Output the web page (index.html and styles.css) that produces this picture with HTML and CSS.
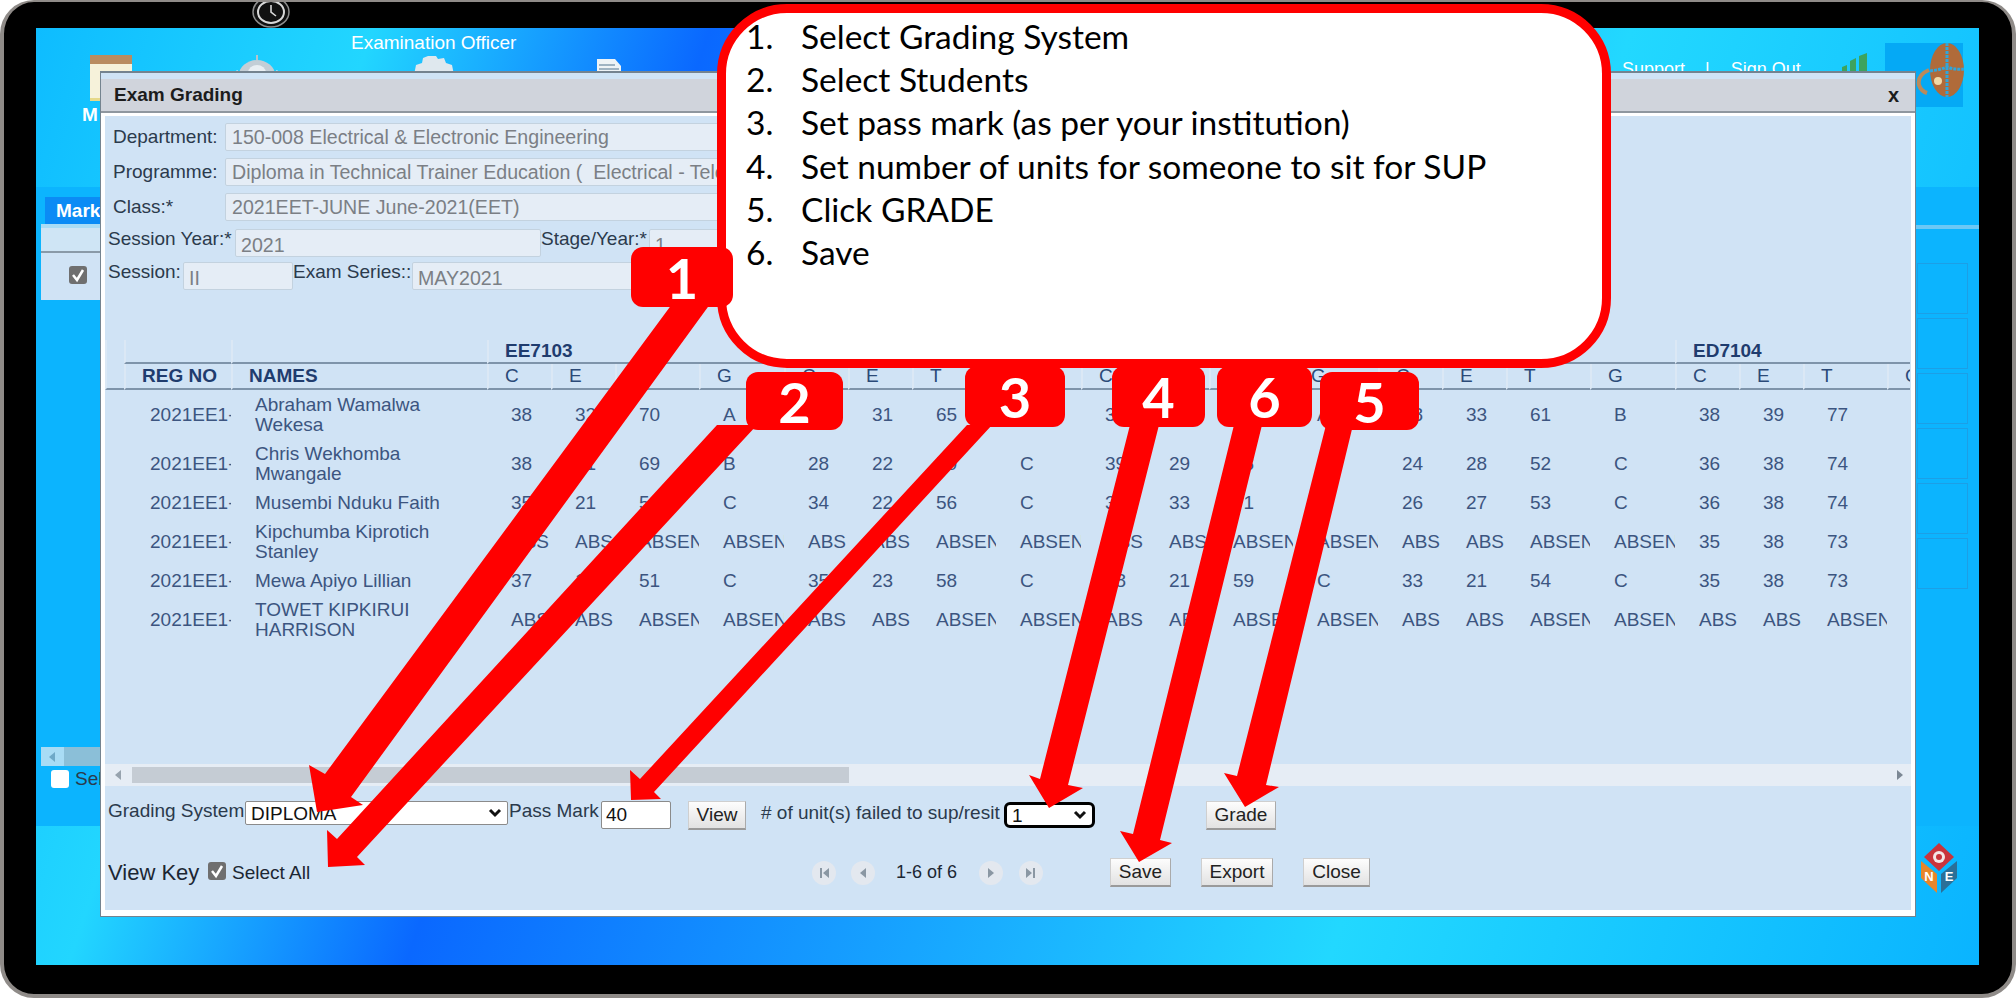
FILE: index.html
```html
<!DOCTYPE html>
<html lang="en">
<head>
    <meta charset="UTF-8">
    <title>Exam Grading</title>
    <link rel="stylesheet" href="styles.css">
</head>
<body>
<div class="device">
    <svg class="camera" width="38" height="30" viewBox="0 0 38 30">
        <ellipse cx="19" cy="13" rx="18" ry="15" fill="#111" stroke="#8d8d8d" stroke-width="1.5"/>
        <ellipse cx="19" cy="13" rx="13" ry="11" fill="none" stroke="#d8d8d8" stroke-width="2"/>
        <path d="M19 6v7l5 4" fill="none" stroke="#d8d8d8" stroke-width="1.6"/>
    </svg>

    <div class="screen">
        <header class="topbar">
            <div class="topbar-main">
                <div class="role">Examination Officer</div>
                <div class="nav">
                    <div class="nav-book">
                        <div class="book-icon"></div>
                        <span>M</span>
                    </div>
                    <svg class="nav-wheel" width="42" height="20" viewBox="0 0 42 20">
                        <path d="M20 0h2v5h-2z" fill="#b9c4cc"/>
                        <path d="M3 20a18 15 0 0 1 36 0z" fill="#c3ced6"/>
                        <path d="M3 20 0 16M39 20l3-4" stroke="#e6eef2" stroke-width="3"/>
                        <ellipse cx="21" cy="18" rx="9" ry="8" fill="#e9eff3"/>
                    </svg>
                    <svg class="nav-gear" width="42" height="20" viewBox="0 0 42 20">
                        <path d="M15 1h8l2 3 6-1 2 5 6 2 2 10H1l2-10 6-2 1-5z" fill="#dfe8ee"/>
                    </svg>
                    <svg class="nav-doc" width="26" height="16" viewBox="0 0 26 16">
                        <path d="M1 0h18l6 7v9H1z" fill="#eef3f6"/>
                        <path d="M3 6h16M3 10h20" stroke="#9fb3c2" stroke-width="2"/>
                    </svg>
                </div>
            </div>
            <div class="links">
                <span>Support</span><span class="pipe">|</span><span>Sign Out</span>
                <svg class="signal" width="28" height="18" viewBox="0 0 28 18">
                    <path d="M1 18v-4l5-2v6zM9 18V8l6-3v13zM18 18V3l8-3v18z" fill="#3da35d"/>
                </svg>
            </div>
            <div class="logo">
                <svg width="50" height="56" viewBox="0 0 50 56">
                    <ellipse cx="32" cy="27" rx="17" ry="27" fill="#b06b3a"/>
                    <path d="M32 0v24M15 28q9-1 17-4 8 3 17 2M32 24v30" fill="none" stroke="#2fa6dc" stroke-width="3" stroke-dasharray="3 1"/>
                    <path d="M14 27q-12 5-10 15 2 6 8 8" fill="none" stroke="#b98a5c" stroke-width="4"/>
                    <circle cx="23" cy="38" r="5" fill="#f0d9a8" stroke="#b06b3a" stroke-width="2"/>
                </svg>
            </div>
        </header>

        <section class="panel">
            <div class="panel-left">
                <div class="panel-tab">Mark</div>
                <div class="panel-band"></div>
                <div class="panel-head"></div>
                <div class="panel-row"><span class="tick tick-dark"><svg viewBox="0 0 18 18" width="18" height="18"><path d="M4 9l4 5 6-10" fill="none" stroke="#fff" stroke-width="2.5"/></svg></span></div>
                <div class="panel-scroll"><span class="arrow-left"></span><span class="panel-thumb"></span></div>
                <div class="panel-select"><span class="tick"></span>Select</div>
            </div>
            <div class="panel-right">
                <div class="panel-band"></div>
                <div class="side-box"></div>
                <div class="side-box"></div>
                <div class="side-box"></div>
                <div class="side-box"></div>
                <div class="side-box"></div>
                <div class="side-box"></div>
            </div>
        </section>

        <div class="brand-row">
            <svg width="38" height="50" viewBox="0 0 38 50">
                <path d="M19 0l15 14-15 14L4 14z" fill="#c9343c"/>
                <circle cx="19" cy="14" r="6" fill="#f3e6e6"/>
                <circle cx="19" cy="14" r="3" fill="#c9343c"/>
                <path d="M1 18l16 13v19L1 35z" fill="#e8862a"/>
                <path d="M37 18L21 31v19l16-15z" fill="#2b6f98"/>
                <text x="9" y="38" class="cube-n">N</text>
                <text x="29" y="38" class="cube-e">E</text>
            </svg>
        </div>
    </div>

    <div class="modal">
        <div class="modal-title">
            <span>Exam Grading</span>
            <span class="modal-close">x</span>
        </div>
        <div class="modal-body">
            <div class="form-row">
                <label class="label-wide">Department:</label>
                <input class="field field-long" value="150-008 Electrical &amp; Electronic Engineering" readonly>
            </div>
            <div class="form-row">
                <label class="label-wide">Programme:</label>
                <input class="field field-long" value="Diploma in Technical Trainer Education (  Electrical - Telecommunication)" readonly>
            </div>
            <div class="form-row form-row-last">
                <label class="label-wide">Class:*</label>
                <input class="field field-long" value="2021EET-JUNE June-2021(EET)" readonly>
            </div>
            <div class="form-row form-row-tight">
                <label class="label-year">Session Year:*</label>
                <input class="field field-year" value="2021" readonly>
                <label class="label-stage">Stage/Year:*</label>
                <input class="field field-stage" value="1" readonly>
            </div>
            <div class="form-row form-row-tight">
                <label class="label-session">Session:</label>
                <input class="field field-session" value="II" readonly>
                <label class="label-series">Exam Series::</label>
                <input class="field field-series" value="MAY2021" readonly>
            </div>

            <div class="table-wrap">
                <table class="grades">
                    <colgroup>
                        <col class="col-gap"><col class="col-reg"><col class="col-name">
                        <col class="col-c"><col class="col-e"><col class="col-t"><col class="col-g">
                        <col class="col-c"><col class="col-e"><col class="col-t"><col class="col-g">
                        <col class="col-c"><col class="col-e"><col class="col-t"><col class="col-g">
                        <col class="col-c"><col class="col-e"><col class="col-t"><col class="col-g">
                        <col class="col-c"><col class="col-e"><col class="col-t"><col class="col-g">
                    </colgroup>
                    <thead>
                        <tr class="head-units">
                            <th class="blank"></th><th></th><th></th>
                            <th colspan="4">EE7103</th>
                            <th colspan="4"></th>
                            <th colspan="4"></th>
                            <th colspan="4"></th>
                            <th colspan="4">ED7104</th>
                        </tr>
                        <tr class="head-cols">
                            <th></th><th>REG NO</th><th>NAMES</th>
                            <th>C</th><th>E</th><th>T</th><th>G</th>
                            <th>C</th><th>E</th><th>T</th><th>G</th>
                            <th>C</th><th>E</th><th>T</th><th>G</th>
                            <th>C</th><th>E</th><th>T</th><th>G</th>
                            <th>C</th><th>E</th><th>T</th><th>G</th>
                        </tr>
                    </thead>
                    <tbody>
                        <tr class="tall">
                            <td></td><td class="reg">2021EE1-</td><td class="name">Abraham Wamalwa Wekesa</td>
                            <td>38</td><td>32</td><td>70</td><td>A</td>
                            <td>34</td><td>31</td><td>65</td><td>B</td>
                            <td>38</td><td>32</td><td>70</td><td>A</td>
                            <td>28</td><td>33</td><td>61</td><td>B</td>
                            <td>38</td><td>39</td><td>77</td><td></td>
                        </tr>
                        <tr class="tall">
                            <td></td><td class="reg">2021EE1-</td><td class="name">Chris Wekhomba Mwangale</td>
                            <td>38</td><td>31</td><td>69</td><td>B</td>
                            <td>28</td><td>22</td><td>50</td><td>C</td>
                            <td>39</td><td>29</td><td>68</td><td>B</td>
                            <td>24</td><td>28</td><td>52</td><td>C</td>
                            <td>36</td><td>38</td><td>74</td><td></td>
                        </tr>
                        <tr>
                            <td></td><td class="reg">2021EE1-</td><td class="name">Musembi Nduku Faith</td>
                            <td>35</td><td>21</td><td>56</td><td>C</td>
                            <td>34</td><td>22</td><td>56</td><td>C</td>
                            <td>38</td><td>33</td><td>71</td><td>A</td>
                            <td>26</td><td>27</td><td>53</td><td>C</td>
                            <td>36</td><td>38</td><td>74</td><td></td>
                        </tr>
                        <tr class="tall">
                            <td></td><td class="reg">2021EE1-</td><td class="name">Kipchumba Kiprotich Stanley</td>
                            <td>ABS</td><td>ABS</td><td>ABSENT</td><td>ABSENT</td>
                            <td>ABS</td><td>ABS</td><td>ABSENT</td><td>ABSENT</td>
                            <td>ABS</td><td>ABS</td><td>ABSENT</td><td>ABSENT</td>
                            <td>ABS</td><td>ABS</td><td>ABSENT</td><td>ABSENT</td>
                            <td>35</td><td>38</td><td>73</td><td></td>
                        </tr>
                        <tr>
                            <td></td><td class="reg">2021EE1-</td><td class="name">Mewa Apiyo Lillian</td>
                            <td>37</td><td>14</td><td>51</td><td>C</td>
                            <td>35</td><td>23</td><td>58</td><td>C</td>
                            <td>38</td><td>21</td><td>59</td><td>C</td>
                            <td>33</td><td>21</td><td>54</td><td>C</td>
                            <td>35</td><td>38</td><td>73</td><td></td>
                        </tr>
                        <tr class="tall">
                            <td></td><td class="reg">2021EE1-</td><td class="name">TOWET KIPKIRUI HARRISON</td>
                            <td>ABS</td><td>ABS</td><td>ABSENT</td><td>ABSENT</td>
                            <td>ABS</td><td>ABS</td><td>ABSENT</td><td>ABSENT</td>
                            <td>ABS</td><td>ABS</td><td>ABSENT</td><td>ABSENT</td>
                            <td>ABS</td><td>ABS</td><td>ABSENT</td><td>ABSENT</td>
                            <td>ABS</td><td>ABS</td><td>ABSENT</td><td></td>
                        </tr>
                    </tbody>
                </table>
            </div>

            <div class="hscroll">
                <span class="arrow-left arrow-grey"></span>
                <span class="hscroll-thumb"></span>
                <span class="arrow-right"></span>
            </div>

            <div class="controls">
                <label class="grading-label">Grading System</label>
                <select class="grading-select"><option>DIPLOMA</option></select>
                <label class="pass-label">Pass Mark</label>
                <input class="pass-input" value="40">
                <button class="btn btn-view">View</button>
                <span class="units-label"># of unit(s) failed to sup/resit</span>
                <select class="units-select"><option>1</option></select>
                <button class="btn btn-grade">Grade</button>
            </div>

            <div class="actions">
                <span class="view-key">View Key</span>
                <span class="tick tick-dark tick-all"><svg viewBox="0 0 18 18" width="18" height="18"><path d="M4 9l4 5 6-10" fill="none" stroke="#fff" stroke-width="2.5"/></svg></span>
                <span class="select-all">Select All</span>
                <span class="pager pager-first"><svg width="12" height="12" viewBox="0 0 12 12"><path d="M2 1h2v10H2zM11 1v10L5 6z" fill="#8a97a3"/></svg></span>
                <span class="pager pager-prev"><svg width="12" height="12" viewBox="0 0 12 12"><path d="M9 1v10L3 6z" fill="#8a97a3"/></svg></span>
                <span class="pager-text">1-6 of 6</span>
                <span class="pager pager-next"><svg width="12" height="12" viewBox="0 0 12 12"><path d="M3 1v10l6-5z" fill="#8a97a3"/></svg></span>
                <span class="pager pager-last"><svg width="12" height="12" viewBox="0 0 12 12"><path d="M1 1v10l6-5zM8 1h2v10H8z" fill="#8a97a3"/></svg></span>
                <button class="btn btn-save">Save</button>
                <button class="btn btn-export">Export</button>
                <button class="btn btn-close">Close</button>
            </div>
        </div>
    </div>

    <!-- tutorial overlay -->
    <svg class="arrows" width="2016" height="998" viewBox="0 0 2016 998">
        <polygon points="675,300 713,300 351,797 363,805 317,812 309,765 325,774"/>
        <polygon points="717,425 757,425 357,857 365,865 328,867 327,830 337,839"/>
        <polygon points="967,425 992,425 654,792 661,799 631,800 630,770 640,779"/>
        <polygon points="1130,425 1159,425 1068,785 1083,788 1049,808 1029,775 1040,779"/>
        <polygon points="1234,425 1262,425 1160,840 1172,843 1139,862 1120,831 1133,834"/>
        <polygon points="1326,425 1353,425 1266,785 1279,787 1245,807 1224,773 1237,776"/>
    </svg>
    <div class="badge badge-2">2</div>
    <div class="badge badge-3">3</div>
    <div class="badge badge-4">4</div>
    <div class="badge badge-6">6</div>
    <div class="badge badge-5">5</div>
    <div class="callout">
        <ol>
            <li>Select Grading System</li>
            <li>Select Students</li>
            <li>Set pass mark (as per your institution)</li>
            <li>Set number of units for someone to sit for SUP</li>
            <li>Click GRADE</li>
            <li>Save</li>
        </ol>
    </div>
    <div class="badge badge-1">1</div>
</div>
</body>
</html>
```

FILE: styles.css
```css
* {
    box-sizing: border-box;
}
body {
    margin: 0;
    background-color: #fff;
    font-family: "Liberation Sans", Arial, sans-serif;
    font-size: 19px;
    color: #2b3a4c;
    overflow: hidden;
}

/* tablet frame */
.device {
    position: relative;
    width: 2016px;
    height: 998px;
    padding: 26px 33px 29px 32px;
    background-color: #000;
    border: 4px solid #8f8b88;
    border-top-width: 2px;
    border-radius: 34px;
    overflow: hidden;
}
.camera {
    position: absolute;
    left: 248px;
    top: -3px;
}
.screen {
    display: flex;
    flex-direction: column;
    height: 937px;
    background: linear-gradient(108deg, #0ebcff 0%, #22d6ff 15%, #0a68ff 30%, #22d8ff 71%, #0ab4ff 100%);
}

/* header behind the dialog */
.topbar {
    display: flex;
    height: 159px;
    color: #fff;
}
.topbar-main {
    width: 1586px;
}
.role {
    padding: 4px 0 0 315px;
    height: 27px;
    line-height: 22px;
}
.nav {
    display: flex;
    align-items: flex-start;
}
.nav-book {
    width: 64px;
    margin-left: 46px;
    height: 90px;
}
.book-icon {
    width: 42px;
    height: 46px;
    margin-left: 8px;
    background: linear-gradient(#b98c60 0 9px, #f6f2da 9px);
    border-bottom: 3px solid #e6d98a;
}
.nav-book span {
    display: block;
    margin-top: 3px;
    font-weight: bold;
}
.nav-wheel {
    margin-left: 90px;
}
.nav-gear {
    margin-left: 135px;
}
.nav-doc {
    margin: 4px 0 0 141px;
}
.links {
    display: flex;
    align-items: flex-start;
    width: 263px;
    padding-top: 31px;
    font-size: 18px;
    line-height: 20px;
}
.pipe {
    margin: 0 21px 0 20px;
}
.signal {
    margin: -6px 0 0 40px;
}
.logo {
    width: 78px;
    height: 64px;
    margin-top: 15px;
    padding-left: 30px;
    background-color: #05a9f5;
}

/* page panel behind the dialog */
.panel {
    display: flex;
    justify-content: space-between;
    height: 639px;
    background-color: #0cb4fe;
}
.panel-left {
    width: 64px;
    padding: 10px 0 0 5px;
}
.panel-tab {
    height: 27px;
    margin-left: 4px;
    padding-left: 11px;
    background-color: #0b8bf5;
    color: #fff;
    font-weight: bold;
    line-height: 28px;
    white-space: nowrap;
}
.panel-band {
    height: 4px;
    background-color: #a9dcf5;
}
.panel-head {
    height: 25px;
    background-color: #cfe5f5;
    border-bottom: 2px solid #8a9aa8;
}
.panel-row {
    height: 47px;
    padding: 13px 0 0 28px;
    background-color: #d0e3f5;
}
.panel-scroll {
    display: flex;
    align-items: center;
    height: 19px;
    margin-top: 447px;
    padding-left: 8px;
    background-color: #a9dcf5;
}
.panel-thumb {
    flex: 1;
    height: 19px;
    margin-left: 9px;
    background-color: #8bbfd8;
}
.panel-select {
    display: flex;
    align-items: center;
    height: 40px;
    padding: 0 0 14px 10px;
    white-space: nowrap;
}
.panel-select .tick {
    flex: none;
    margin-right: 6px;
}
.panel-right {
    width: 64px;
    padding-top: 38px;
}
.panel-right .panel-band {
    margin-bottom: 34px;
    background-color: #6cc8f5;
}
.side-box {
    height: 51px;
    margin: 0 11px 4px 2px;
    border: 1px solid #1c9fe6;
}
.brand-row {
    display: flex;
    justify-content: flex-end;
    padding: 17px 21px 0 0;
}
.cube-n, .cube-e {
    font-family: "Liberation Sans", Arial, sans-serif;
    font-size: 13px;
    font-weight: bold;
    text-anchor: middle;
    fill: #fff;
}

/* exam grading dialog */
.modal {
    position: absolute;
    left: 96px;
    top: 69px;
    width: 1816px;
    height: 846px;
    background-color: #fff;
    border: 1px solid #74838f;
    border-top-width: 2px;
}
.modal-title {
    display: flex;
    justify-content: space-between;
    height: 40px;
    margin-bottom: 3px;
    padding: 6px 16px 0 13px;
    background: linear-gradient(#cfe3f5 0 6px, #d0d4dc 6px);
    border-bottom: 2px solid #8f979f;
    color: #1c1c1c;
    font-weight: bold;
    line-height: 32px;
}
.modal-close {
    font-size: 20px;
}
.modal-body {
    height: 794px;
    margin: 0 4px;
    padding-top: 7px;
    background-color: #d0e3f5;
}
.form-row {
    display: flex;
    height: 28px;
    margin-bottom: 7px;
    padding-left: 8px;
    line-height: 28px;
    white-space: nowrap;
    overflow: hidden;
}
.form-row-last {
    margin-bottom: 8px;
}
.form-row-tight {
    margin-bottom: 5px;
    padding-left: 3px;
    line-height: 20px;
}
label {
    display: block;
    flex: none;
}
.label-wide {
    width: 112px;
}
.label-year {
    width: 127px;
}
.label-stage {
    width: 108px;
}
.label-session {
    width: 75px;
}
.label-series {
    width: 119px;
}
.field {
    flex: none;
    height: 28px;
    padding: 0 6px;
    border: 1px solid #c3d2df;
    border-radius: 2px;
    background-color: #e5edf6;
    color: #7b7f85;
    font-family: inherit;
    font-size: 19.6px;
    outline: none;
}
.field-long {
    width: 560px;
}
.field-year {
    width: 306px;
}
.field-stage {
    width: 120px;
}
.field-session {
    width: 110px;
}
.field-series {
    width: 300px;
}
.form-row-tight .field {
    padding: 4px 5px 0;
}

/* marks table */
.table-wrap {
    width: 1805px;
    height: 424px;
    margin-top: 50px;
    overflow: hidden;
}
.grades {
    table-layout: fixed;
    width: 1867px;
    border-collapse: separate;
    border-spacing: 0;
    color: #3c5580;
}
.col-gap {
    width: 19px;
}
.col-reg {
    width: 107px;
}
.col-name {
    width: 256px;
}
.col-c, .col-e {
    width: 64px;
}
.col-t {
    width: 84px;
}
.col-g {
    width: 85px;
}
th {
    padding: 0 0 0 16px;
    color: #1f3c6e;
    text-align: left;
    font-weight: bold;
    white-space: nowrap;
    overflow: hidden;
    border-left: 2px solid #dbe8f5;
}
.head-units th {
    height: 24px;
    border-bottom: 2px solid #7e94aa;
}
.head-units th:first-child {
    border-bottom: none;
}
.head-cols th {
    height: 26px;
    color: #2b4a78;
    font-weight: normal;
    border-bottom: 2px solid #7e94aa;
}
.head-cols th:nth-child(2), .head-cols th:nth-child(3) {
    color: #1f3c6e;
    font-weight: bold;
}
td {
    height: 29px;
    padding: 0 0 0 24px;
    line-height: 20px;
    white-space: nowrap;
    overflow: hidden;
}
.tall td {
    height: 49px;
}
td.reg {
    padding-left: 26px;
}
td.name {
    padding-right: 37px;
    white-space: normal;
}

/* scrollbar */
.hscroll {
    display: flex;
    align-items: center;
    height: 22px;
    padding: 0 8px 0 10px;
    background-color: #e6edf5;
}
.hscroll-thumb {
    width: 717px;
    height: 16px;
    margin-left: 11px;
    background-color: #c5ccd4;
}
.arrow-left, .arrow-right {
    flex: none;
    width: 0;
    height: 0;
    border-top: 5px solid transparent;
    border-bottom: 5px solid transparent;
}
.arrow-left {
    border-right: 6px solid #6fa9c8;
}
.arrow-grey {
    border-right-color: #97a3ae;
}
.arrow-right {
    margin-left: auto;
    border-left: 6px solid #7c8894;
}

/* bottom controls */
.controls {
    display: flex;
    align-items: flex-start;
    height: 57px;
    margin-top: 15px;
    padding-left: 3px;
    white-space: nowrap;
}
.grading-label {
    width: 137px;
    line-height: 20px;
}
.grading-select, .units-select {
    appearance: none;
    padding: 0 0 0 5px;
    background-color: #fff;
    background-image: url("data:image/svg+xml,%3Csvg xmlns='http://www.w3.org/2000/svg' width='14' height='10'%3E%3Cpath d='M2 2l5 5 5-5' fill='none' stroke='%23111' stroke-width='3'/%3E%3C/svg%3E");
    background-repeat: no-repeat;
    background-position: right 5px center;
    color: #111;
    font-family: inherit;
    font-size: 19px;
}
.grading-select {
    width: 263px;
    height: 24px;
    border: 1px solid #8b8b8b;
    border-radius: 2px;
}
.pass-label {
    width: 92px;
    margin-left: 1px;
    line-height: 20px;
}
.pass-input {
    width: 70px;
    height: 28px;
    padding: 0 4px;
    border: 1px solid #8b8b8b;
    border-radius: 2px;
    font-family: inherit;
    font-size: 19px;
    color: #111;
}
.btn {
    flex: none;
    height: 29px;
    padding: 0;
    border: 1px solid #cfcfcf;
    border-right-color: #aaa;
    border-bottom: 2px solid #9a9a9a;
    background: linear-gradient(#fdfdfd, #e2e2e2);
    color: #222;
    font-family: inherit;
    font-size: 19px;
}
.btn-view {
    width: 58px;
    margin-left: 17px;
}
.units-label {
    width: 243px;
    margin-left: 15px;
    line-height: 24px;
}
.units-select {
    width: 91px;
    height: 26px;
    margin-top: 1px;
    border: 3px solid #000;
    border-radius: 6px;
}
.btn-grade {
    width: 70px;
    margin-left: 111px;
}
.actions {
    display: flex;
    align-items: center;
    height: 29px;
    padding-left: 3px;
    white-space: nowrap;
}
.view-key {
    width: 100px;
    font-size: 22px;
    color: #1c2733;
}
.tick {
    display: inline-block;
    width: 18px;
    height: 18px;
    border-radius: 3px;
    background-color: #fff;
}
.tick svg {
    display: block;
}
.tick-dark {
    background-color: #6f6f6f;
}
.tick-all {
    margin-top: -4px;
}
.select-all {
    width: 80px;
    margin-left: 6px;
    color: #1c2733;
}
.pager {
    display: flex;
    align-items: center;
    justify-content: center;
    flex: none;
    width: 24px;
    height: 24px;
    border-radius: 50%;
    background-color: #e3e8ef;
}
.pager-first {
    margin-left: 500px;
}
.pager-prev {
    margin-left: 15px;
}
.pager-text {
    width: 104px;
    padding-left: 21px;
    font-size: 18px;
    color: #1c2733;
}
.pager-last {
    margin-left: 16px;
}
.btn-save {
    width: 61px;
    margin-left: 67px;
}
.btn-export {
    width: 72px;
    margin-left: 30px;
}
.btn-close {
    width: 67px;
    margin-left: 30px;
}

/* tutorial overlay */
.arrows {
    position: absolute;
    left: -4px;
    top: -2px;
    fill: #ff0000;
}
.callout {
    position: absolute;
    left: 713px;
    top: 2px;
    width: 894px;
    height: 364px;
    padding: 2px 0 0 20px;
    background-color: #fff;
    border: 9px solid #ff0000;
    border-radius: 70px;
    font-family: Lato, "Open Sans", sans-serif;
    font-size: 33.5px;
    color: #000;
}
.callout ol {
    margin: 0;
    padding: 0;
    list-style: none;
    counter-reset: step;
}
.callout li {
    display: flex;
    height: 43.2px;
    line-height: 43.2px;
    counter-increment: step;
}
.callout li::before {
    content: counter(step) ".";
    width: 55px;
}
.badge {
    position: absolute;
    display: flex;
    align-items: center;
    justify-content: center;
    background-color: #ff0000;
    border-radius: 12px;
    color: #fff;
    font-family: Lato, "Open Sans", sans-serif;
    font-size: 56px;
    font-weight: bold;
}
.badge-1 {
    left: 627px;
    top: 245px;
    width: 102px;
    height: 60px;
}
.badge-2 {
    left: 742px;
    top: 370px;
    width: 97px;
    height: 58px;
}
.badge-3 {
    left: 961px;
    top: 364px;
    width: 100px;
    height: 61px;
}
.badge-4 {
    left: 1108px;
    top: 364px;
    width: 93px;
    height: 61px;
}
.badge-6 {
    left: 1213px;
    top: 364px;
    width: 95px;
    height: 61px;
}
.badge-5 {
    left: 1316px;
    top: 370px;
    width: 99px;
    height: 58px;
}
```
